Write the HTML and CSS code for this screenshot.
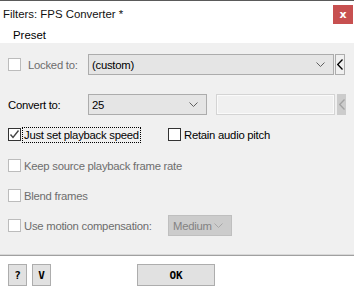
FILE: index.html
```html
<!DOCTYPE html>
<html>
<head>
<meta charset="utf-8">
<link rel="stylesheet" href="styles.css">
</head>
<body>
<div class="window">
  <div class="titlebar">
    <span class="title">Filters: FPS Converter *</span>
    <span class="close">x</span>
  </div>
  <div class="menubar"><span class="menu">Preset</span></div>
  <div class="panel">
    <div class="row row1">
      <span class="cb disabled"></span>
      <span class="label disabled-text lbl-locked">Locked to:</span>
      <div class="combo combo-custom"><span>(custom)</span>
        <svg class="arrow" width="9" height="5" viewBox="0 0 9 5"><path d="M0.5 0.5 L4.5 4.5 L8.5 0.5" fill="none" stroke="#606060" stroke-width="1"/></svg>
      </div>
      <div class="sidebtn"><svg width="6" height="11" viewBox="0 0 6 11"><path d="M5.5 0.5 L0.7 5.5 L5.5 10.5" fill="none" stroke="#000" stroke-width="1.3"/></svg></div>
    </div>
    <div class="row row2">
      <span class="label lbl-convert">Convert to:</span>
      <div class="combo combo-25"><span>25</span>
        <svg class="arrow" width="9" height="5" viewBox="0 0 9 5"><path d="M0.5 0.5 L4.5 4.5 L8.5 0.5" fill="none" stroke="#606060" stroke-width="1"/></svg>
      </div>
      <div class="textbox"></div>
      <div class="sidebtn off"><svg width="6" height="11" viewBox="0 0 6 11"><path d="M5.5 0.5 L0.7 5.5 L5.5 10.5" fill="none" stroke="#a3a3a3" stroke-width="1.3"/></svg></div>
    </div>
    <div class="row row3">
      <div class="cell">
        <span class="cb on"><svg width="11" height="11" viewBox="0 0 11 11"><path d="M1.5 5.5 L4 8.5 L9.5 1.5" fill="none" stroke="#444" stroke-width="1.4"/></svg></span>
        <span class="label focus">Just set playback speed</span>
      </div>
      <span class="cb on"></span>
      <span class="label">Retain audio pitch</span>
    </div>
    <div class="row row4">
      <span class="cb disabled"></span>
      <span class="label disabled-text">Keep source playback frame rate</span>
    </div>
    <div class="row row5">
      <span class="cb disabled"></span>
      <span class="label disabled-text">Blend frames</span>
    </div>
    <div class="row row6">
      <div class="cell">
        <span class="cb disabled"></span>
        <span class="label disabled-text">Use motion compensation:</span>
      </div>
      <div class="combo combo-medium"><span>Medium</span>
        <svg class="arrow" width="9" height="5" viewBox="0 0 9 5"><path d="M0.5 0.5 L4.5 4.5 L8.5 0.5" fill="none" stroke="#a8a8a8" stroke-width="1"/></svg>
      </div>
    </div>
  </div>
  <div class="footer">
    <button class="btn small">?</button>
    <button class="btn small">V</button>
    <button class="btn ok">OK</button>
  </div>
</div>
</body>
</html>
```

FILE: styles.css
```css
* { box-sizing: border-box; }
html, body { margin: 0; padding: 0; background: #fff; }
body {
  width: 354px;
  height: 292px;
  overflow: hidden;
  font-family: "Liberation Sans", Arial, sans-serif;
  font-size: 11.3px;
  letter-spacing: -0.25px;
  color: #000;
}
.window { border-top: 1px solid #5a5a5a; height: 292px; display: flex; flex-direction: column; }
.titlebar {
  height: 24px;
  display: flex;
  align-items: center;
  justify-content: space-between;
}
.title { padding-left: 3px; font-size: 11.4px; letter-spacing: 0; color: #111; margin-top: 2px; }
.close {
  width: 20px; height: 19px; margin-right: 1px; margin-top: 3px;
  background: #c75050; color: #fff; font-weight: bold; font-size: 11px;
  display: flex; align-items: center; justify-content: center; line-height: 1;
  font-family: "DejaVu Sans", sans-serif; letter-spacing: 0;
}
.menubar { height: 18px; display: flex; align-items: center; }
.menu { padding-left: 13px; font-size: 11.4px; letter-spacing: 0; margin-top: 2px; }
.panel {
  background: #f0f0f0;
  height: 212px;
  padding: 11px 0 0 8px;
  display: flex;
  flex-direction: column;
}
.row { display: flex; align-items: center; }
.row1 { height: 21px; }
.row2 { height: 21px; margin-top: 19px; }
.row3 { height: 15px; margin-top: 12px; }
.row4 { height: 13px; margin-top: 17px; }
.row5 { height: 13px; margin-top: 17px; }
.row6 { height: 21px; margin-top: 13px; }
.cell { width: 160px; display: flex; align-items: center; flex: none; }

.cb {
  width: 13px; height: 13px; flex: none;
  background: #fff;
  border: 1px solid #333;
  display: flex; align-items: center; justify-content: center;
}
.cb.disabled { border-color: #bcbcbc; }
.label { margin-left: 3px; white-space: nowrap; }
.disabled-text { color: #6d6d6d; }
.lbl-locked { width: 60px; margin-left: 7px; }
.lbl-convert { width: 80px; margin-left: 0; }
.focus { outline: 1px dotted #000; outline-offset: 0; padding: 0 1px; margin-left: 2px; line-height: 14px; }

.combo {
  height: 21px;
  background: #e5e5e5;
  border: 1px solid #acacac;
  display: flex; align-items: center; justify-content: space-between;
  padding: 0 8px 0 3px;
}
.combo-custom { width: 246px; }
.combo-25 { width: 119px; }
.combo-medium { width: 64px; background: #cccccc; border-color: #bfbfbf; color: #838383; padding-left: 4px; }
.arrow { flex: none; }
.sidebtn {
  width: 10px; height: 21px; margin-left: 1px;
  border: 1px solid #adadad; background: #f0f0f0;
  display: flex; align-items: center; justify-content: center;
}
.sidebtn.off { background: #cccccc; border-color: #cccccc; margin-left: 2px; width: 9px; }
.textbox {
  width: 119px; height: 21px; margin-left: 9px;
  border: 1px solid #d4d4d4;
  box-shadow: inset 0 0 0 1px #fafafa;
  background: #f0f0f0;
}

.footer {
  border-top: 1px solid #a0a0a0;
  box-shadow: 0 -1px 0 #d8d8d8;
  flex: 1;
  display: flex;
  align-items: flex-start;
  padding: 8px 0 0 8px;
}
.btn {
  height: 22px;
  background: #e1e1e1;
  border: 1px solid #adadad;
  font-family: "DejaVu Sans Mono", monospace;
  font-weight: bold;
  font-size: 11px;
  letter-spacing: 0;
  padding: 0;
  color: #000;
}
.btn.small { width: 19px; margin-right: 5px; }
.btn.ok { width: 78px; margin-left: 81px; }
```
